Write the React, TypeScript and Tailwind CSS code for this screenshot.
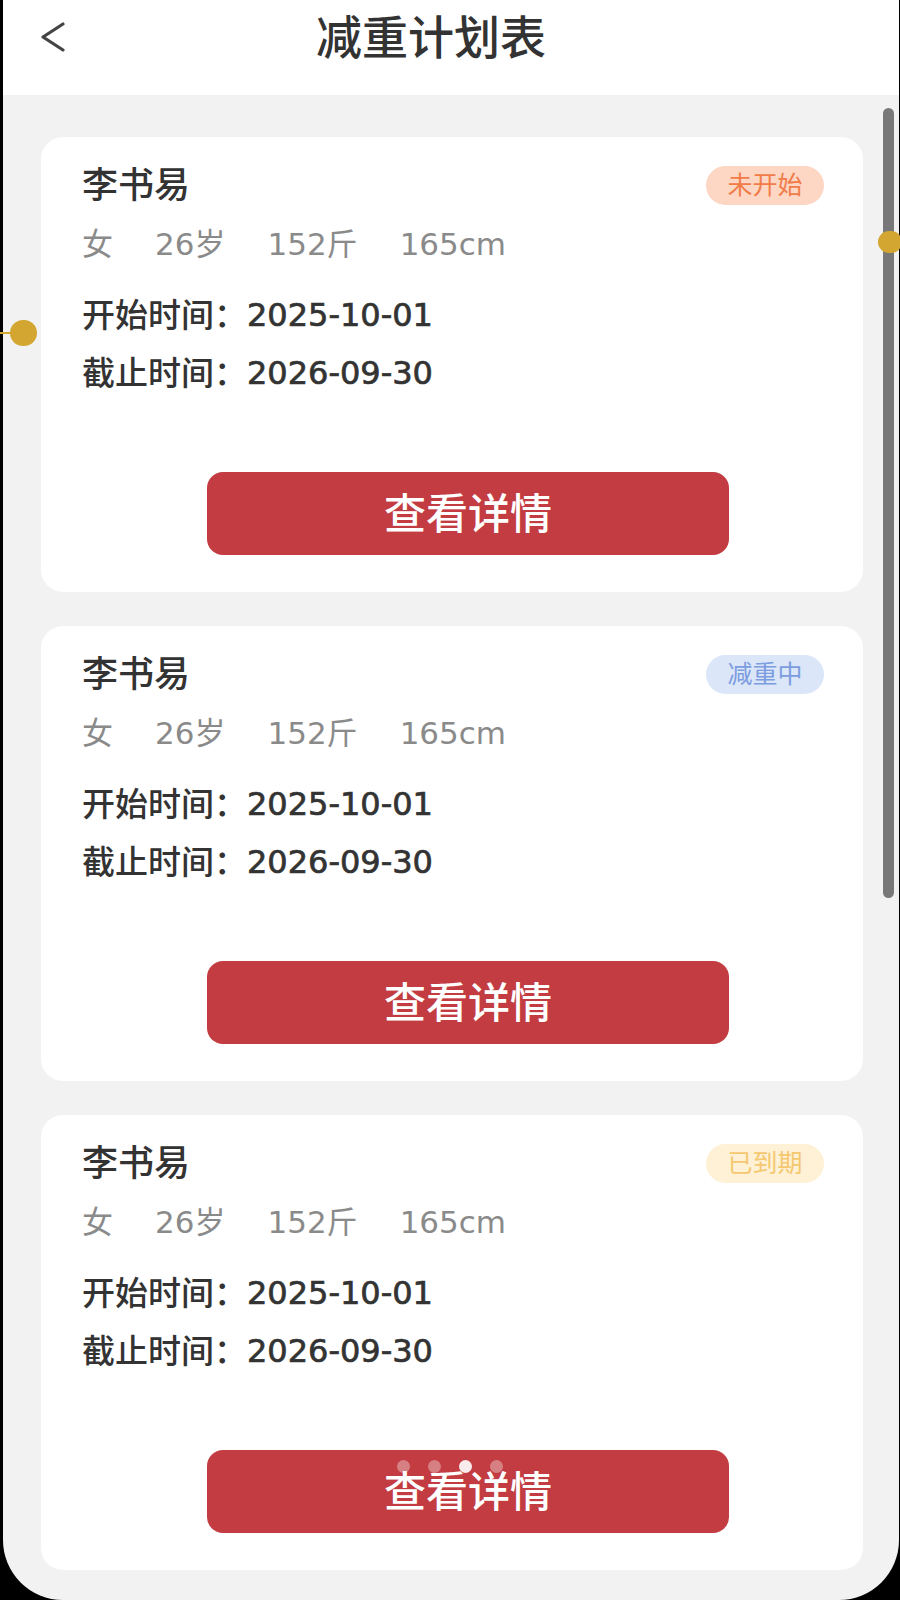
import React from "react";

const FONT = { fontFamily: 'Inter, "Noto Sans CJK SC", sans-serif' };
const NUM = { fontFamily: '"DejaVu Sans", "Noto Sans CJK SC", sans-serif' };

function Card({ status, dots }: { status: "a" | "b" | "c"; dots?: boolean }) {
  return (
    <div className="relative w-[822px] h-[455px] shrink-0 bg-white rounded-[22px] pl-[41px] pt-[27px] flex flex-col">
      {status === "a" && (
        <div className="absolute top-[29px] right-[39px] w-[118px] h-[39px] rounded-full bg-[#fdd6c4] text-[#f27c48] text-[25px] leading-[39px] text-center">
          未开始
        </div>
      )}
      {status === "b" && (
        <div className="absolute top-[29px] right-[39px] w-[118px] h-[39px] rounded-full bg-[#dbe6f8] text-[#7c9de0] text-[25px] leading-[39px] text-center">
          减重中
        </div>
      )}
      {status === "c" && (
        <div className="absolute top-[29px] right-[39px] w-[118px] h-[39px] rounded-full bg-[#fef1d6] text-[#f5c870] text-[25px] leading-[39px] text-center">
          已到期
        </div>
      )}
      <div className="h-[42px] leading-[42px] text-[36px] font-medium text-[#333333]">李书易</div>
      <div className="mt-[18px] h-[40px] leading-[40px] text-[31px] text-[#8a8a8a] flex gap-[42px]" style={NUM}>
        <span>女</span>
        <span>26岁</span>
        <span>152斤</span>
        <span>165cm</span>
      </div>
      <div className="mt-[31px] h-[40px] leading-[40px] text-[33px] font-medium text-[#333333] flex">
        <span>开始时间：</span>
        <span style={NUM} className="text-[32px] [-webkit-text-stroke:0.7px_#333333]">2025-10-01</span>
      </div>
      <div className="mt-[18px] h-[40px] leading-[40px] text-[33px] font-medium text-[#333333] flex">
        <span>截止时间：</span>
        <span style={NUM} className="text-[32px] [-webkit-text-stroke:0.7px_#333333]">2026-09-30</span>
      </div>
      <div className="relative mt-[79px] ml-[125px] w-[522px] h-[83px] rounded-[16px] bg-[#c23c42] text-white text-[42px] font-medium flex items-center justify-center">
        查看详情
        {dots && (
          <div className="absolute left-[190px] top-[10px] flex gap-[18px]">
            <span className="w-[13px] h-[13px] rounded-full bg-white/35" />
            <span className="w-[13px] h-[13px] rounded-full bg-white/35" />
            <span className="w-[13px] h-[13px] rounded-full bg-white/90" />
            <span className="w-[13px] h-[13px] rounded-full bg-white/35" />
          </div>
        )}
      </div>
    </div>
  );
}

export default function App() {
  return (
    <div className="relative w-[900px] h-[1600px] bg-black overflow-hidden" style={FONT}>
      <div className="ml-[3px] mr-[1px] h-[1600px] bg-[#f2f2f2] rounded-b-[60px] overflow-hidden flex flex-col">
        <div className="h-[95px] shrink-0 bg-white flex items-start pl-[38px]">
          <svg width="26" height="32" viewBox="0 0 26 32" className="shrink-0 mt-[21px]">
            <polyline points="22,3 2,16 22,29" fill="none" stroke="#444444" strokeWidth="3.2" strokeLinecap="round" strokeLinejoin="round" />
          </svg>
          <div className="flex-1 pr-[104px] mt-[14px] text-center text-[46px] font-medium text-[#333333] leading-none">
            减重计划表
          </div>
        </div>
        <div className="flex flex-col gap-[34px] pt-[42px] pl-[38px]">
          <Card status="a" />
          <Card status="b" />
          <Card status="c" dots />
        </div>
      </div>
      <div className="absolute left-[883px] top-[108px] w-[11px] h-[790px] rounded-full bg-[#787878]" />
      <div className="absolute left-[878px] top-[231px] w-[24px] h-[22px] rounded-full bg-[#d3a632]" />
      <div className="absolute left-0 top-[332px] w-[14px] h-[2px] bg-[#d3a632]" />
      <div className="absolute left-[10px] top-[320px] w-[27px] h-[26px] rounded-full bg-[#d3a632]" />
    </div>
  );
}
